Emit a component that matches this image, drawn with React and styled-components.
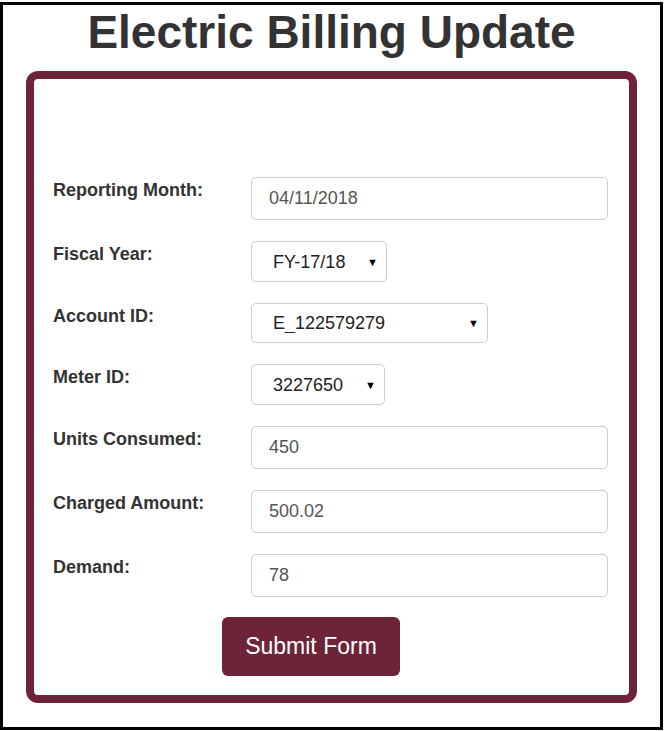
import styled, { createGlobalStyle } from "styled-components";

const maroon = "#6d2438";

const GlobalStyle = createGlobalStyle`
  body {
    margin: 0;
    background: #fff;
    font-family: "Liberation Sans", Arial, sans-serif;
  }
`;

const Frame = styled.div`
  box-sizing: border-box;
  width: 663px;
  height: 728px;
  margin-top: 2px;
  border: 3px solid #000;
  background: #fff;
`;

const Title = styled.h1`
  margin: 0;
  padding-top: 4px;
  font-size: 46px;
  line-height: 46px;
  font-weight: bold;
  text-align: center;
  color: #333;
`;

const Card = styled.div`
  box-sizing: border-box;
  width: 611px;
  margin: 16px auto 0;
  padding: 98px 21px 19px 19px;
  border: 8px solid ${maroon};
  border-radius: 12px;
`;

const Form = styled.form`
  display: flex;
  flex-direction: column;
  gap: 21px;
`;

const Row = styled.div`
  display: flex;
  align-items: flex-start;
`;

const Label = styled.label`
  width: 198px;
  padding-top: 3px;
  font-size: 18px;
  font-weight: bold;
  color: #333;
`;

const Input = styled.input`
  box-sizing: border-box;
  width: 357px;
  height: 43px;
  padding: 0 0 0 17px;
  border: 1px solid #ccc;
  border-radius: 5px;
  font-family: inherit;
  font-size: 18px;
  color: #555;
  background: #fff;
  outline: none;
`;

const SelectWrap = styled.div`
  position: relative;
  width: ${(props) => props.width}px;
  &::after {
    content: "▼";
    position: absolute;
    right: 9px;
    top: 50%;
    transform: translateY(-50%);
    font-size: 11px;
    color: #000;
    pointer-events: none;
  }
`;

const Select = styled.select`
  box-sizing: border-box;
  width: 100%;
  height: ${(props) => props.h || 41}px;
  padding: 0 0 0 21px;
  border: 1px solid #ccc;
  border-radius: 5px;
  font-family: inherit;
  font-size: 18px;
  color: #222;
  background: #fff;
  appearance: none;
  outline: none;
`;

const SubmitButton = styled.button`
  width: 178px;
  height: 59px;
  margin: 20px 0 0 169px;
  border: none;
  border-radius: 6px;
  background: ${maroon};
  color: #fff;
  font-family: inherit;
  font-size: 23px;
`;

const App = () => {
  return (
    <>
      <GlobalStyle />
      <Frame>
        <Title>Electric Billing Update</Title>
        <Card>
          <Form onSubmit={(e) => e.preventDefault()}>
            <Row>
              <Label>Reporting Month:</Label>
              <Input defaultValue="04/11/2018" />
            </Row>
            <Row>
              <Label>Fiscal Year:</Label>
              <SelectWrap width={136}>
                <Select defaultValue="FY-17/18">
                  <option>FY-17/18</option>
                </Select>
              </SelectWrap>
            </Row>
            <Row>
              <Label>Account ID:</Label>
              <SelectWrap width={237}>
                <Select h={40} defaultValue="E_122579279">
                  <option>E_122579279</option>
                </Select>
              </SelectWrap>
            </Row>
            <Row>
              <Label>Meter ID:</Label>
              <SelectWrap width={134}>
                <Select defaultValue="3227650">
                  <option>3227650</option>
                </Select>
              </SelectWrap>
            </Row>
            <Row>
              <Label>Units Consumed:</Label>
              <Input defaultValue="450" />
            </Row>
            <Row>
              <Label>Charged Amount:</Label>
              <Input defaultValue="500.02" />
            </Row>
            <Row>
              <Label>Demand:</Label>
              <Input defaultValue="78" />
            </Row>
          </Form>
          <SubmitButton type="submit">Submit Form</SubmitButton>
        </Card>
      </Frame>
    </>
  );
};

export default App;
